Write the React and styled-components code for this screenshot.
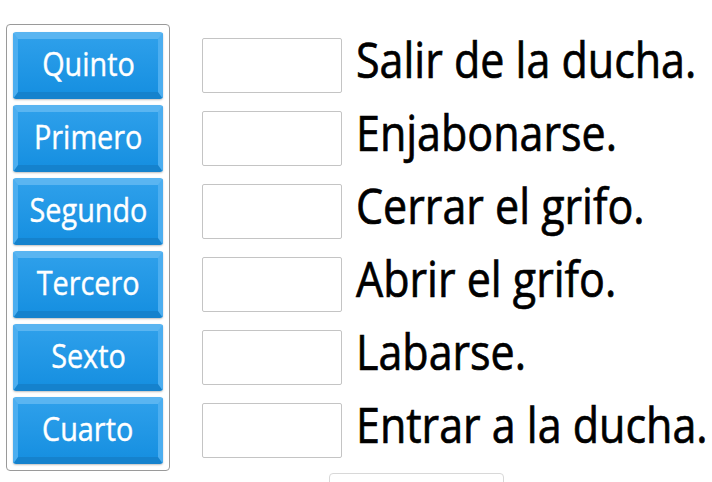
import React from "react";
import styled, { createGlobalStyle } from "styled-components";

const GlobalStyle = createGlobalStyle`
  html, body {
    margin: 0;
    padding: 0;
    background: #fff;
    overflow: hidden;
    font-family: "Open Sans", "Noto Sans", sans-serif;
  }
`;

const ordinals = ["Quinto", "Primero", "Segundo", "Tercero", "Sexto", "Cuarto"];
const steps = [
  "Salir de la ducha.",
  "Enjabonarse.",
  "Cerrar el grifo.",
  "Abrir el grifo.",
  "Labarse.",
  "Entrar a la ducha.",
];

const Page = styled.div`
  display: flex;
  align-items: flex-start;
  width: 712px;
  height: 482px;
`;

const Bank = styled.div`
  margin: 24px 0 0 6px;
  padding: 7px 6px 6px 6px;
  border: 1px solid #9a9a9a;
  border-radius: 4px;
  display: flex;
  flex-direction: column;
  gap: 6px;
`;

const Tile = styled.div`
  box-sizing: border-box;
  width: 150px;
  height: 67px;
  display: flex;
  align-items: center;
  justify-content: center;
  padding-bottom: 5px;
  border-top: 7px solid #5ab5f1;
  border-left: 5px solid #4caef0;
  border-right: 5px solid #4caef0;
  border-bottom: 7px solid #1582cd;
  border-radius: 3px;
  background: linear-gradient(#2d9fea, #1790e1);
  box-shadow: 0 1px 2px rgba(0, 0, 0, 0.25);
  color: #fff;
  font-size: 32px;
`;

const TileText = styled.span`
  display: inline-block;
  transform: scaleX(0.9);
  white-space: nowrap;
  -webkit-text-stroke: 0.4px #fff;
`;

const Board = styled.div`
  margin: 38px 0 0 32px;
  display: flex;
  flex-direction: column;
`;

const Rows = styled.div`
  display: flex;
  flex-direction: column;
  gap: 18px;
`;

const Row = styled.div`
  display: flex;
  align-items: flex-start;
  gap: 14px;
`;

const Slot = styled.div`
  box-sizing: border-box;
  width: 140px;
  height: 55px;
  flex: none;
  border: 1px solid #c4c4c4;
  border-radius: 2px;
  background: #fff;
`;

const Step = styled.div`
  font-size: 50px;
  line-height: 43px;
  color: #000;
  white-space: nowrap;
  -webkit-text-stroke: 0.7px #000;
  transform: scaleX(0.86);
  transform-origin: left center;
`;

const Submit = styled.div`
  box-sizing: border-box;
  margin: 15px 0 0 127px;
  width: 175px;
  height: 40px;
  padding-top: 5px;
  border: 1px solid #d8d8d8;
  border-radius: 4px;
  text-align: center;
  font-size: 16px;
  color: #333;
`;

export default function App() {
  return (
    <>
      <GlobalStyle />
      <Page>
        <Bank>
          {ordinals.map((o) => (
            <Tile key={o}>
              <TileText>{o}</TileText>
            </Tile>
          ))}
        </Bank>
        <Board>
          <Rows>
            {steps.map((s) => (
              <Row key={s}>
                <Slot />
                <Step>{s}</Step>
              </Row>
            ))}
          </Rows>
          <Submit>Enviar respuestas</Submit>
        </Board>
      </Page>
    </>
  );
}
